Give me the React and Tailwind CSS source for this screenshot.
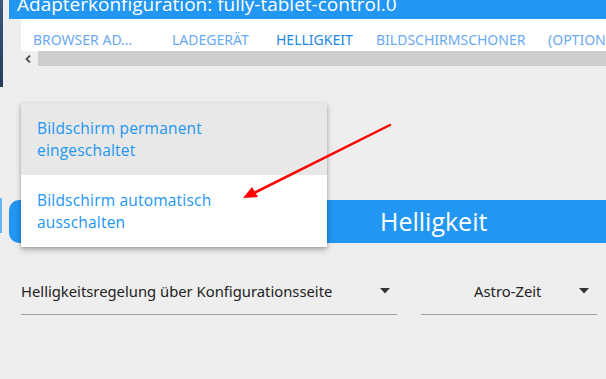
const tabs = [
  { label: 'Browser Ad…', width: 'w-[139px]' },
  { label: 'Ladegerät', width: 'w-[104px]' },
  { label: 'Helligkeit', width: 'w-[100px]', active: true },
  { label: 'Bildschirmschoner', width: 'w-[172px]' },
  { label: '(Optionale', width: 'w-[90px]' },
]

function Caret() {
  return (
    <svg width="10" height="6" viewBox="0 0 10 6" className="shrink-0">
      <path d="M0 0 L10 0 L5 5.5 Z" fill="#333333" />
    </svg>
  )
}

function App() {
  return (
    <div
      className="relative flex h-[379px] w-[606px] overflow-hidden bg-[#eeeeee]"
      style={{ fontFamily: '"Open Sans", "Noto Sans", sans-serif' }}
    >
      {/* window edge */}
      <div className="flex w-[9px] shrink-0 flex-col">
        <div className="h-[87px] w-[3px] bg-gradient-to-b from-[#3a5a7e] to-[#243c58]" />
        <div className="h-[111px]" />
        <div className="h-[35px] w-[2px] bg-[#64b5f6]" />
      </div>

      <div className="flex min-w-0 flex-1 flex-col">
        <div className="h-[19px] overflow-hidden bg-[#2196f3] pl-[8px]">
          <div className="-mt-[10px] whitespace-nowrap text-[19px] leading-[28px] text-white">
            Adapterkonfiguration: fully-tablet-control.0
          </div>
        </div>

        <div className="flex h-[32px] pl-[12px]">
          <div
            className="flex flex-1 items-end overflow-hidden bg-white pb-[1px]"
            style={{ fontFamily: '"Noto Sans", sans-serif' }}
          >
            {tabs.map((tab) => (
              <div
                key={tab.label}
                className={`${tab.width} shrink-0 whitespace-nowrap pl-[12px] text-[14px] uppercase leading-[20px] ${
                  tab.active ? 'text-[#1e88e5]' : 'text-[#6aaaf2]'
                }`}
              >
                {tab.label}
              </div>
            ))}
          </div>
        </div>

        <div className="flex h-[15px] items-center">
          <div className="flex w-[29px] items-center justify-end pr-[7px]">
            <svg width="6" height="8" viewBox="0 0 6 8">
              <path d="M5 0.5 L1.5 4 L5 7.5" fill="none" stroke="#505050" strokeWidth="1.8" />
            </svg>
          </div>
          <div className="h-full flex-1 bg-[#cdcdcd]" />
        </div>

        <div className="h-[134px]" />

        <div className="flex h-[43px] items-center rounded-l-[10px] bg-[#2196f3] pl-[371px]">
          <span className="text-[25px] leading-none text-white">Helligkeit</span>
        </div>

        <div
          className="flex gap-[24px] pl-[12px] pt-[38px]"
          style={{ fontFamily: '"Noto Sans", sans-serif' }}
        >
          <div className="flex h-[34px] w-[376px] items-start justify-between border-b border-[#9e9e9e] pr-[7px]">
            <span className="text-[14.8px] leading-[20px] text-[#222222]">
              Helligkeitsregelung über Konfigurationsseite
            </span>
            <div className="pt-[7px]">
              <Caret />
            </div>
          </div>
          <div className="flex h-[34px] w-[176px] items-start justify-between border-b border-[#9e9e9e] pl-[53px] pr-[8px]">
            <span className="text-[14.8px] leading-[20px] text-[#222222]">Astro-Zeit</span>
            <div className="pt-[7px]">
              <Caret />
            </div>
          </div>
        </div>
      </div>

      {/* open dropdown menu */}
      <div className="absolute left-[21px] top-[103px] w-[306px] bg-white shadow-[0_3px_6px_rgba(0,0,0,0.25),0_1px_3px_rgba(0,0,0,0.15)]">
        <div className="h-[72px] bg-[#e8e8e8] px-[16px] pt-[14px] text-[15.5px] leading-[22px] tracking-[0.2px] text-[#2196f3]">
          Bildschirm permanent
          <br />
          eingeschaltet
        </div>
        <div className="h-[72px] px-[16px] pt-[14px] text-[15.5px] leading-[22px] tracking-[0.2px] text-[#2196f3]">
          Bildschirm automatisch
          <br />
          ausschalten
        </div>
      </div>

      {/* annotation arrow */}
      <svg className="pointer-events-none absolute left-0 top-0" width="606" height="379">
        <line x1="390" y1="125" x2="252" y2="194" stroke="#ff0000" strokeWidth="2.5" strokeLinecap="round" />
        <path d="M243 198 L252 187 L258 197 Z" fill="#ff0000" />
      </svg>
    </div>
  )
}

export default App
